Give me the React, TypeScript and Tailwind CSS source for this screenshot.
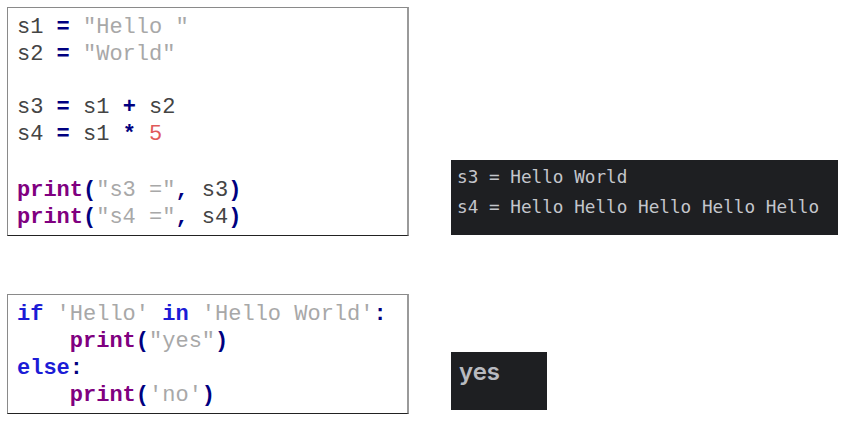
import type React from "react"

const kw = "font-bold text-[#000080]"
const str = "text-[#a8a8a8]"
const fn = "font-bold text-[#800080]"
const blue = "font-bold text-[#1c1cd6]"

function CodeBox({ children, className }: { children: React.ReactNode; className?: string }) {
  return (
    <div
      className={`border border-[#8a8a8a] border-b-[#222] border-r-2 border-r-[#9a9a9a] bg-white pl-[9px] text-[22px] text-[#444] whitespace-pre ${className ?? ""}`}
      style={{ fontFamily: '"Liberation Mono", "Courier New", monospace' }}
    >
      {children}
    </div>
  )
}

export default function App() {
  return (
    <div className="w-[867px] h-[429px] bg-white overflow-hidden">
      <div className="flex pl-[7px] pt-[7px]">
        <CodeBox className="w-[402px] h-[229px] pt-[7px] leading-[26.8px]">
          <div>s1 <span className={kw}>=</span> <span className={str}>"Hello "</span></div>
          <div>s2 <span className={kw}>=</span> <span className={str}>"World"</span></div>
          <div>{" "}</div>
          <div>s3 <span className={kw}>=</span> s1 <span className={kw}>+</span> s2</div>
          <div>s4 <span className={kw}>=</span> s1 <span className={kw}>*</span> <span className="text-[#e05a5a]">5</span></div>
          <div className="h-[29px]">{" "}</div>
          <div><span className={fn}>print</span><span className={kw}>(</span><span className={str}>"s3 ="</span><span className={kw}>,</span> s3<span className={kw}>)</span></div>
          <div><span className={fn}>print</span><span className={kw}>(</span><span className={str}>"s4 ="</span><span className={kw}>,</span> s4<span className={kw}>)</span></div>
        </CodeBox>
        <div
          className="ml-[42px] mt-[153px] w-[387px] h-[75px] bg-[#1e1f22] pl-[6px] pt-[2px] text-[17.7px] leading-[30px] text-[#c4c6cc] whitespace-pre"
          style={{ fontFamily: '"DejaVu Sans Mono", monospace' }}
        >
          <div>s3 = Hello World</div>
          <div>s4 = Hello Hello Hello Hello Hello</div>
        </div>
      </div>
      <div className="flex pl-[7px] mt-[58px]">
        <CodeBox className="w-[402px] h-[120px] pt-[6px] leading-[27px]">
          <div><span className={blue}>if</span> <span className={str}>'Hello'</span> <span className={blue}>in</span> <span className={str}>'Hello World'</span><span className={kw}>:</span></div>
          <div>    <span className={fn}>print</span><span className={kw}>(</span><span className={str}>"yes"</span><span className={kw}>)</span></div>
          <div><span className={blue}>else</span><span className={kw}>:</span></div>
          <div>    <span className={fn}>print</span><span className={kw}>(</span><span className={str}>'no'</span><span className={kw}>)</span></div>
        </CodeBox>
        <div
          className="ml-[42px] mt-[58px] w-[96px] h-[58px] bg-[#1e1f22] pl-[8px] pt-[5px] text-[24px] font-semibold leading-[30px] text-[#b8bac0]"
          style={{ fontFamily: 'Inter, "Noto Sans", sans-serif' }}
        >
          yes
        </div>
      </div>
    </div>
  )
}
